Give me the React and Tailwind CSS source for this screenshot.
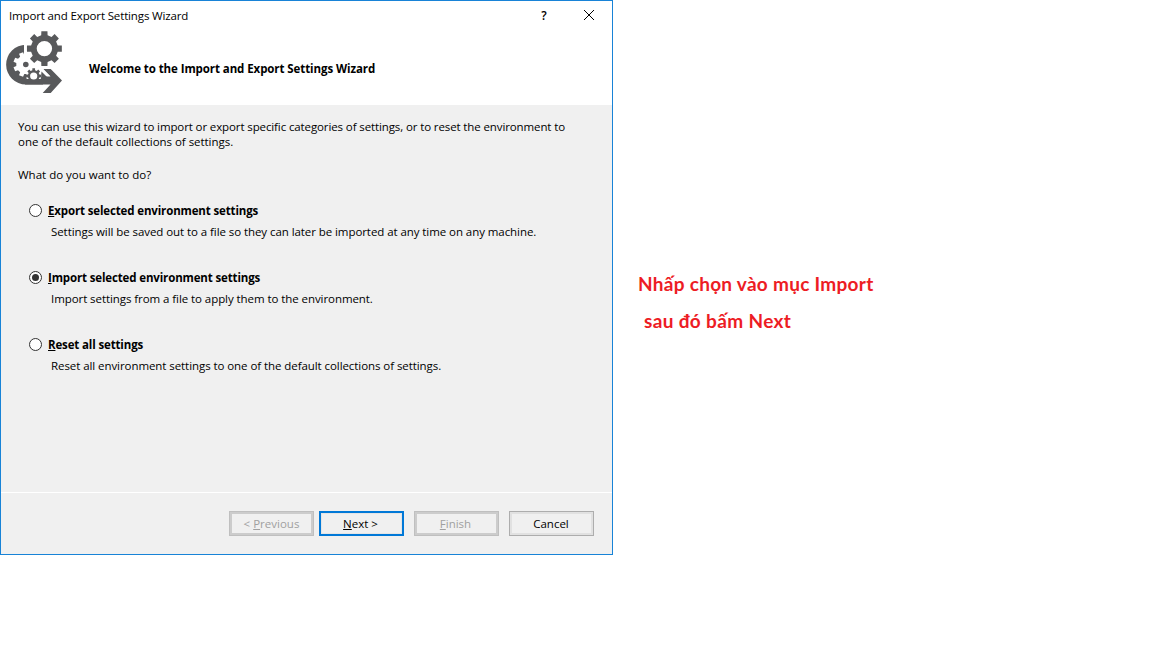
import React from "react";

function gearPath(cx, cy, outer, inner, hole, teeth, phase = 0) {
  const step = (Math.PI * 2) / teeth;
  const point = (r, a) => `${(cx + r * Math.cos(a)).toFixed(2)} ${(cy + r * Math.sin(a)).toFixed(2)}`;
  const points = [];
  for (let i = 0; i < teeth; i++) {
    const a = phase + i * step;
    points.push(point(inner, a - step * 0.3), point(outer, a - step * 0.22), point(outer, a + step * 0.22), point(inner, a + step * 0.3));
  }
  let d = `M${points.join("L")}Z`;
  if (hole) {
    d += `M${cx - hole} ${cy}a${hole} ${hole} 0 1 0 ${hole * 2} 0a${hole} ${hole} 0 1 0 ${-hole * 2} 0Z`;
  }
  return d;
}

function WizardIcon() {
  return (
    <svg width="58" height="64" viewBox="5 30 58 64" fill="#58595b" className="block">
      <path d="M26 44.8A19.8 19.8 0 0 0 26 84.5H50.5L42.7 92.9H50.7L62 80.5 50.7 69H43.3L50.5 76.5H30L26 60Z" />
      <path d={gearPath(25.8, 64.5, 12.6, 9.6, 0, 8, Math.PI / 8)} fill="#fff" />
      <path d="M24 44h3v13h12v12h4l7 7H33l-9-10z" fill="#fff" />
      <circle cx="25.8" cy="64.5" r="2.8" />
      <path d="M41.5 71.5L47 77H41Z" />
      <circle cx="33.7" cy="76" r="7.6" fill="#fff" />
      <path d="M25 79h18v5.5H25z" />
      <path d={gearPath(33.7, 76, 7.8, 5.9, 0, 8)} />
      <circle cx="33.7" cy="76" r="3.6" fill="#fff" />
      <path d={gearPath(44.4, 48.6, 17.7, 13.7, 7.7, 8)} fillRule="evenodd" />
    </svg>
  );
}

function Option({ accel, label, text, checked }) {
  return (
    <div className="h-[67px]">
      <div className="flex h-4 items-center">
        <span className="mb-px flex size-[13px] items-center justify-center rounded-full border border-[#333] bg-white">
          {checked && <span className="size-[7px] rounded-full bg-[#333]" />}
        </span>
        <span className="ml-[6px] font-bold tracking-[-0.14px]">
          <u className="underline-offset-1">{accel}</u>{label}
        </span>
      </div>
      <p className="mt-[5px] ml-[22px] h-4 tracking-[-0.07px]">{text}</p>
    </div>
  );
}

export default function App() {
  return (
    <div className="flex h-[648px] w-[1152px] overflow-hidden bg-white font-['Open_Sans',sans-serif] text-[11.5px] leading-4 whitespace-nowrap text-black">
      <section className="flex h-[555px] w-[613px] flex-col border border-[#1883d7] bg-[#f0f0f0]">
        <header className="h-[104px] bg-white">
          <div className="flex h-[29px] items-center pl-2">
            <span className="tracking-[-0.14px]">Import and Export Settings Wizard</span>
            <span className="ml-auto w-3 text-center text-[12px] font-semibold">?</span>
            <svg className="mr-[17px] mb-px ml-[33px]" width="12" height="12" viewBox="0 0 12 12" fill="none" stroke="#000">
              <path d="M1 1l10 10M11 1L1 11" />
            </svg>
          </div>
          <div className="flex pl-1">
            <WizardIcon />
            <h1 className="mt-[31px] ml-[26px] font-bold tracking-[-0.085px]">Welcome to the Import and Export Settings Wizard</h1>
          </div>
        </header>
        <main className="h-[387px] pt-[14px] pl-[17px]">
          <p className="leading-[15px]">
            <span className="tracking-[-0.113px]">You can use this wizard to import or export specific categories of settings, or to reset the environment to</span><br />
            <span className="tracking-[-0.04px]">one of the default collections of settings.</span>
          </p>
          <p className="mt-[18px] mb-5">What do you want to do?</p>
          <div className="pl-[11px]">
            <Option accel="E" label="xport selected environment settings" text="Settings will be saved out to a file so they can later be imported at any time on any machine." />
            <Option checked accel="I" label="mport selected environment settings" text="Import settings from a file to apply them to the environment." />
            <Option accel="R" label="eset all settings" text="Reset all environment settings to one of the default collections of settings." />
          </div>
        </main>
        <footer className="flex flex-1 border-t border-white pt-[18px] pl-[228px]">
          <button className="h-[25px] w-[85px] border border-[#bfbfbf] bg-[#f0f0f0] text-[#a0a0a0] shadow-[inset_0_0_0_2px_#cccccc]">&lt; <u className="underline-offset-1">P</u>revious</button>
          <button className="ml-[5px] h-[25px] w-[85px] border-2 border-[#0078d7] bg-[#f0f0f0] pr-[2px] shadow-[inset_0_0_0_1px_#e5e5e5]"><u className="underline-offset-1">N</u>ext &gt;</button>
          <button className="ml-[10px] h-[25px] w-[85px] border border-[#bfbfbf] bg-[#f0f0f0] pr-[2px] text-[#a0a0a0] shadow-[inset_0_0_0_2px_#cccccc]"><u className="underline-offset-1">F</u>inish</button>
          <button className="ml-[10px] h-[25px] w-[85px] border border-[#adadad] bg-[#f0f0f0] pr-px shadow-[inset_0_0_0_2px_#e1e1e1]">Cancel</button>
        </footer>
      </section>
      <aside className="mt-[265px] ml-[25px] font-['Lato','Open_Sans',sans-serif] text-[19px] leading-[37px] font-bold text-[#ed1c24]">
        <p className="tracking-[0.29px]">Nhấp chọn vào mục Import</p>
        <p className="pl-[6px] tracking-[0.35px]">sau đó bấm Next</p>
      </aside>
    </div>
  );
}
